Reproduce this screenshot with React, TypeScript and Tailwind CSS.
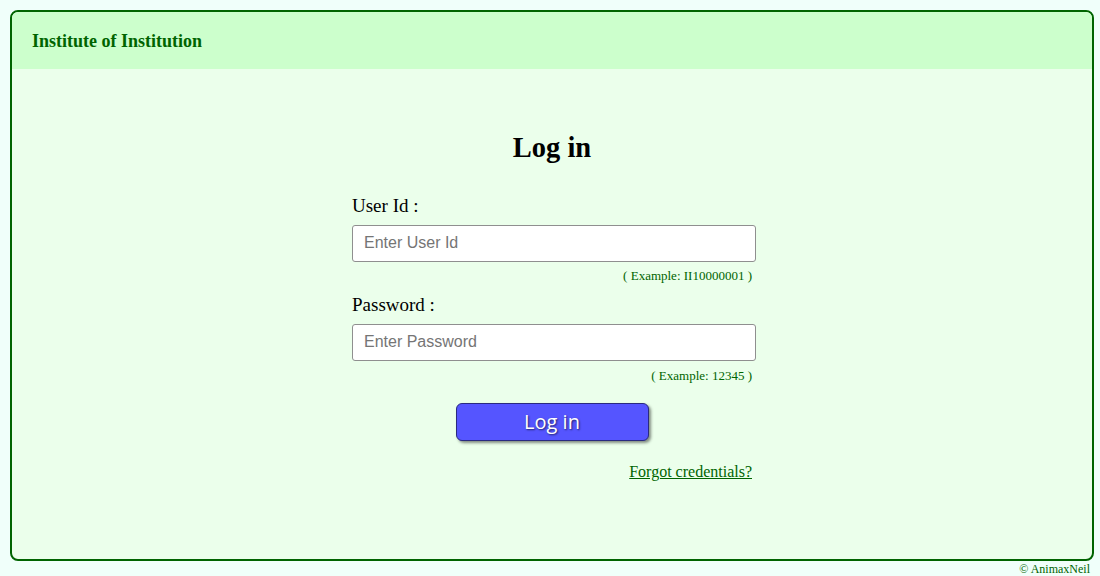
import React from 'react';

const serif = { fontFamily: '"Liberation Serif", "Times New Roman", serif' };
const sans = { fontFamily: '"Liberation Sans", Arial, sans-serif' };

export default function App() {
  return (
    <div className="min-h-[576px] bg-[#f0fffa] pt-[10px] pl-[10px] pr-[6px]" style={serif}>
      <div className="h-[551px] rounded-[8px] border-2 border-[#006400] bg-[#ebffeb] overflow-hidden flex flex-col">
        <div className="h-[57px] bg-[#ccffcc] flex items-center pl-[20px] pt-[2px]">
          <span className="text-[18px] font-bold text-[#006400]">Institute of Institution</span>
        </div>
        <div className="flex flex-col items-center pt-[65px]">
          <h1 className="text-[28.5px] font-bold text-black leading-none">Log in</h1>
          <form className="w-[404px] mt-[33px] ml-[4px] flex flex-col" onSubmit={(e) => e.preventDefault()}>
            <label className="text-[19px] text-black leading-none">User Id :</label>
            <input
              placeholder="Enter User Id"
              className="mt-[10px] h-[37px] w-full rounded-[3px] border border-[#8f8f8f] bg-white px-[11px] text-[16px] placeholder:text-[#757575] outline-none"
              style={sans}
            />
            <span className="self-end mr-[4px] mt-[7px] text-[13px] text-[#006400] leading-none">( Example: II10000001 )</span>
            <label className="mt-[13px] text-[19px] text-black leading-none">Password :</label>
            <input
              type="password"
              placeholder="Enter Password"
              className="mt-[10px] h-[37px] w-full rounded-[3px] border border-[#8f8f8f] bg-white px-[11px] text-[16px] placeholder:text-[#757575] outline-none"
              style={sans}
            />
            <span className="self-end mr-[4px] mt-[8px] text-[13px] text-[#006400] leading-none">( Example: 12345 )</span>
            <button
              type="submit"
              className="self-center mr-[4px] mt-[21px] h-[38px] w-[193px] rounded-[6px] border border-[#2a2a80] bg-[#5555ff] text-[20px] text-white shadow-[2px_2px_3px_rgba(0,0,0,0.45)] [text-shadow:1px_1px_2px_rgba(0,0,0,0.6)]"
              style={{ fontFamily: '"Open Sans", "Liberation Sans", sans-serif' }}
            >
              Log in
            </button>
            <a href="#" className="self-end mr-[4px] mt-[23px] text-[16px] text-[#006400] underline leading-none">
              Forgot credentials?
            </a>
          </form>
        </div>
      </div>
      <div className="text-right pr-[4px] text-[12px] text-[#006400] leading-[16px]">© AnimaxNeil</div>
    </div>
  );
}
